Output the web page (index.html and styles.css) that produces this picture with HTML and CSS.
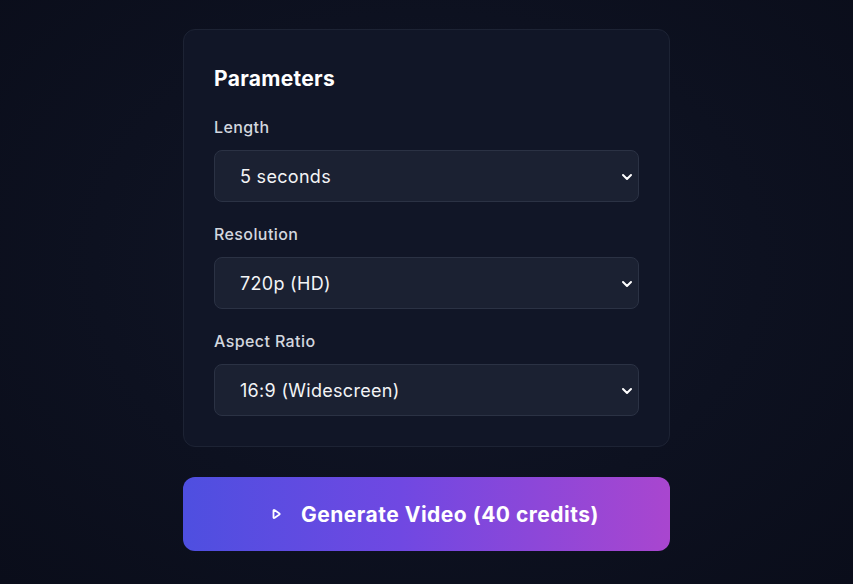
FILE: index.html
```html
<!DOCTYPE html>
<html lang="en">
<head>
<meta charset="utf-8">
<title>Parameters</title>
<link rel="stylesheet" href="styles.css">
</head>
<body>
<main class="page">
  <section class="card">
    <h2 class="card-title">Parameters</h2>
    <div class="field">
      <label class="field-label">Length</label>
      <div class="select">
        <span class="select-value">5 seconds</span>
        <svg class="chevron" viewBox="0 0 12 8" width="12" height="8"><path d="M2 2l4 4 4-4" fill="none" stroke="#fff" stroke-width="2" stroke-linecap="round" stroke-linejoin="round"/></svg>
      </div>
    </div>
    <div class="field">
      <label class="field-label">Resolution</label>
      <div class="select">
        <span class="select-value">720p (HD)</span>
        <svg class="chevron" viewBox="0 0 12 8" width="12" height="8"><path d="M2 2l4 4 4-4" fill="none" stroke="#fff" stroke-width="2" stroke-linecap="round" stroke-linejoin="round"/></svg>
      </div>
    </div>
    <div class="field">
      <label class="field-label">Aspect Ratio</label>
      <div class="select">
        <span class="select-value">16:9 (Widescreen)</span>
        <svg class="chevron" viewBox="0 0 12 8" width="12" height="8"><path d="M2 2l4 4 4-4" fill="none" stroke="#fff" stroke-width="2" stroke-linecap="round" stroke-linejoin="round"/></svg>
      </div>
    </div>
  </section>
  <button class="generate">
    <svg class="play" viewBox="0 0 12 12" width="12" height="12"><path d="M3.5 2.6v6.8c0 .5.5.8.9.5l5-3.4c.4-.3.4-.8 0-1l-5-3.4c-.4-.3-.9 0-.9.5z" fill="none" stroke="#fff" stroke-width="1.8" stroke-linejoin="round"/></svg>
    <span>Generate Video (40 credits)</span>
  </button>
</main>
</body>
</html>
```

FILE: styles.css
```css
* { box-sizing: border-box; }
html, body { height: 100%; }
body {
  margin: 0;
  font-family: Inter, "Noto Sans", "Liberation Sans", sans-serif;
  background: radial-gradient(ellipse at 50% 45%, #121728 0%, #0d1120 55%, #0a0d1a 100%);
  color: #fff;
  overflow: hidden;
}
.page {
  width: 487px;
  margin: 29px auto 0;
  display: flex;
  flex-direction: column;
  gap: 30px;
}
.card {
  background: #111627;
  border: 1px solid #1d2334;
  border-radius: 12px;
  padding: 35px 30px 30px 30px;
  display: flex;
  flex-direction: column;
  gap: 20px;
}
.card-title {
  margin: 0 0 2px;
  font-size: 21px;
  line-height: 28px;
  font-weight: 700;
  letter-spacing: 0.3px;
  color: #fff;
}
.field {
  display: flex;
  flex-direction: column;
  gap: 11px;
}
.field-label {
  font-size: 16px;
  line-height: 24px;
  font-weight: 500;
  letter-spacing: 0.4px;
  color: #d3d7df;
}
.select {
  position: relative;
  height: 52px;
  background: #1b2132;
  border: 1px solid #2b3244;
  border-radius: 8px;
  display: flex;
  align-items: center;
  padding: 0 25px;
}
.select-value {
  font-size: 18px;
  letter-spacing: 0.3px;
  color: #f3f4f6;
}
.chevron {
  position: absolute;
  right: 5px;
  top: 22px;
}
.generate {
  height: 74px;
  border: none;
  border-radius: 12px;
  background: linear-gradient(90deg, #4e4fe0 0%, #7048e2 45%, #a946cf 100%);
  color: #fff;
  font-family: inherit;
  font-size: 21px;
  font-weight: 700;
  letter-spacing: 0.5px;
  display: flex;
  align-items: center;
  justify-content: center;
  gap: 19px;
  padding: 0 0 0 16px;
}
.play { display: block; }
```
